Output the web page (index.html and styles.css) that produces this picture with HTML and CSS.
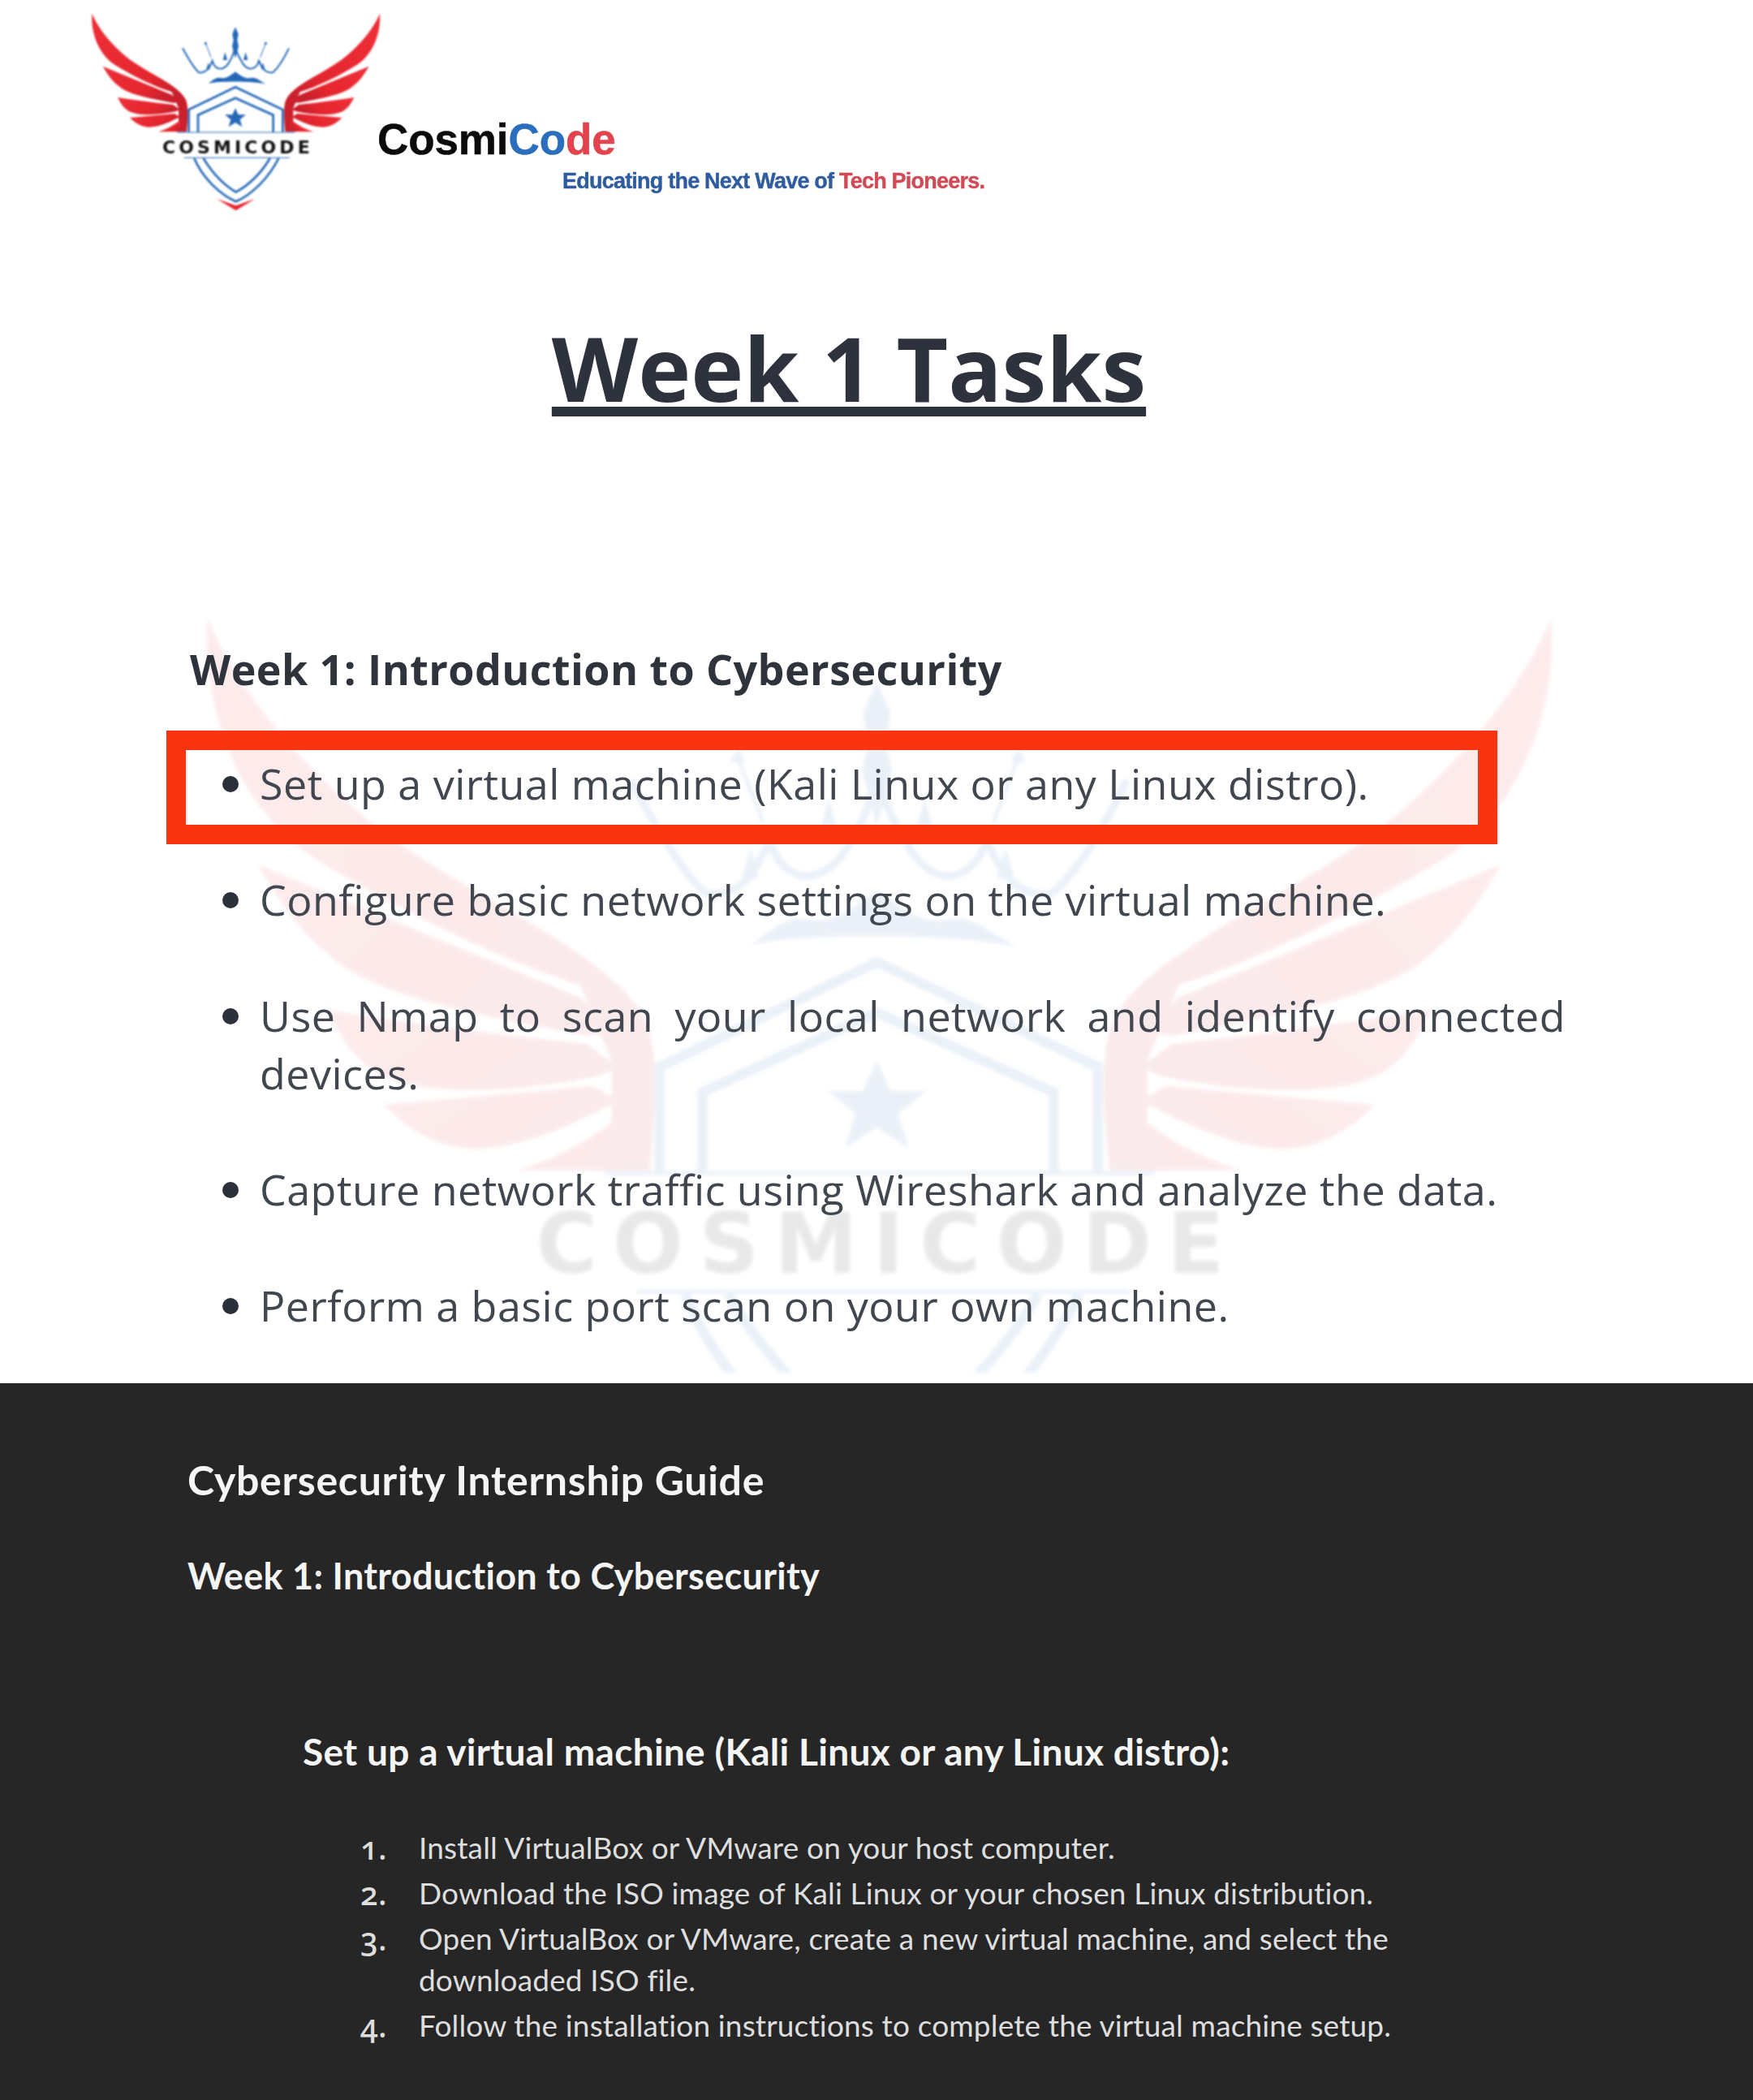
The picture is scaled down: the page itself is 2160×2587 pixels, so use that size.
FILE: index.html
```html
<!DOCTYPE html>
<html lang="en">
<head>
<meta charset="utf-8">
<title>Week 1 Tasks</title>
<link rel="stylesheet" href="styles.css">
</head>
<body>
<svg class="defs" width="0" height="0" aria-hidden="true">
  <defs>
    <linearGradient id="wing-red" x1="0" y1="0" x2="1" y2="0.4">
      <stop offset="0" stop-color="#ee2f38"/>
      <stop offset="0.7" stop-color="#e5262f"/>
      <stop offset="1" stop-color="#c9202c"/>
    </linearGradient>
    <g id="wing" fill="url(#wing-red)">
      <path d="M100 50C125 110 190 190 270 240C340 285 420 320 445 365C456 385 456 420 450 487H420V400L395 340C330 320 250 280 185 240C130 205 95 130 100 50Z"/>
      <path d="M140 245L395 350L425 378L400 380C320 365 230 350 195 315C170 295 155 270 140 245Z"/>
      <path d="M195 360C270 372 340 380 400 387L425 405L410 412C350 425 270 430 235 410C215 398 205 380 195 360Z"/>
      <path d="M240 435L405 420L425 432C390 450 350 470 310 470C280 468 260 455 240 435Z"/>
      <path d="M345 487C375 478 400 465 425 445L445 487Z"/>
    </g>
    <g id="emblem">
      <use href="#wing"/>
      <use href="#wing" transform="translate(1264 0) scale(-1 1)"/>
      <path class="blue-line thin" d="M435 178C455 215 475 250 495 268C515 270 530 262 545 225C555 262 590 265 610 225C622 205 628 190 630 160C632 190 640 205 652 225C672 265 705 262 717 225C732 262 748 270 768 268C790 250 810 215 828 178"/>
      <path class="blue-line hair" d="M520 160L540 212M742 160L722 212"/>
      <path class="blue-fill" d="M630 100L641 125L637 150L642 170L630 215L618 170L623 150L619 125Z"/>
      <path class="blue-fill" d="M592 192L600 222L584 222ZM668 192L676 222L660 222ZM530 232L537 256L523 256ZM732 232L739 256L725 256ZM520 152L526 164L514 164ZM742 152L748 164L736 164Z"/>
      <path class="blue-fill" d="M530 308C545 300 555 285 575 288C590 292 605 285 630 265C655 285 670 292 688 288C708 285 720 300 742 310C700 300 580 298 530 308Z"/>
      <path class="blue-line" d="M458 488V405L630 322L805 405V488"/>
      <path class="blue-line" d="M492 488V425L630 362L770 425V488"/>
      <path class="blue-line" d="M478 585C510 660 575 720 632 745C690 720 752 660 790 585"/>
      <path class="blue-line" d="M512 585C545 640 590 685 632 710C678 685 725 640 758 585"/>
      <path class="blue-fill" d="M630 400L641 424H669L647 442L655 469L630 453L605 469L613 442L591 424H619Z"/>
      <path class="wing-tail" d="M562 735L632 760L702 735L632 778Z"/>
      <path class="rule" d="M415 489H850M440 583H830"/>
      <text class="emblem-text" x="360" y="568" textLength="545">COSMICODE</text>
    </g>
  </defs>
</svg>

<main class="page">
  <section class="doc">
    <svg class="watermark" viewBox="96 0 1070 647" aria-hidden="true"><use href="#emblem"/></svg>

    <header class="brand">
      <svg class="logo" viewBox="96 0 1062 840" role="img" aria-label="CosmiCode logo"><use href="#emblem"/></svg>
      <div class="wordmark">
        <div class="brand-name">Cosmi<span class="c-blue">Co</span><span class="c-red">de</span></div>
        <div class="tagline">Educating the Next Wave of <span class="c-tag-red">Tech Pioneers.</span></div>
      </div>
    </header>

    <h1 class="title">Week 1 Tasks</h1>

    <section class="tasks">
      <h2 class="tasks-heading">Week 1: Introduction to Cybersecurity</h2>
      <ul class="task-list">
        <li>Set up a virtual machine (Kali Linux or any Linux distro).</li>
        <li>Configure basic network settings on the virtual machine.</li>
        <li>Use Nmap to scan your local network and identify connected devices.</li>
        <li>Capture network traffic using Wireshark and analyze the data.</li>
        <li>Perform a basic port scan on your own machine.</li>
      </ul>
      <div class="highlight"></div>
    </section>
  </section>

  <section class="guide">
    <h2 class="guide-title">Cybersecurity Internship Guide</h2>
    <h3 class="guide-week">Week 1: Introduction to Cybersecurity</h3>
    <h4 class="guide-task">Set up a virtual machine (Kali Linux or any Linux distro):</h4>
    <ol class="guide-steps">
      <li>Install VirtualBox or VMware on your host computer.</li>
      <li>Download the ISO image of Kali Linux or your chosen Linux distribution.</li>
      <li>Open VirtualBox or VMware, create a new virtual machine, and select the downloaded ISO file.</li>
      <li>Follow the installation instructions to complete the virtual machine setup.</li>
    </ol>
  </section>
</main>
</body>
</html>
```
FILE: styles.css
```css
* { box-sizing: border-box; }
html, body { margin: 0; padding: 0; background: #fff; }
.defs { position: absolute; }
.page { width: 2160px; }

.wing-tail { fill: #e8262f; }
.blue-fill { fill: #2468b8; }
.blue-line { fill: none; stroke: #2468b8; stroke-width: 8; }
.blue-line.thin { stroke-width: 6; }
.blue-line.hair { stroke-width: 3; }
.rule { fill: none; stroke: #2468b8; stroke-width: 3; }
.emblem-text { font-family: "DejaVu Sans", sans-serif; font-weight: 700; font-size: 66px; fill: #111; }

.doc { position: relative; height: 1704px; overflow: hidden; background: #fff; }
.watermark { position: absolute; left: 249px; top: 684px; width: 1666px; height: 1007px; opacity: 0.09; filter: blur(2px); }

.brand { position: relative; display: flex; height: 280px; padding-left: 112px; }
.logo { width: 354px; height: 280px; flex: none; overflow: visible; filter: blur(0.8px); }
.wordmark { padding-top: 145px; margin-left: -1px; filter: blur(0.7px); }
.brand-name { font-family: "Liberation Sans", Arial, sans-serif; font-weight: 700; font-size: 53px; line-height: 53px; letter-spacing: -0.1px; color: #0b0b0b; -webkit-text-stroke: 0.5px currentColor; }
.c-blue { color: #2a6ebd; }
.c-red { color: #e2434d; }
.tagline { margin: 10px 0 0 228px; font-family: "Liberation Sans", Arial, sans-serif; font-weight: 700; font-size: 27px; line-height: 30px; letter-spacing: -0.78px; color: #2f5c9f; white-space: nowrap; -webkit-text-stroke: 0.4px currentColor; }
.c-tag-red { color: #d24a55; }

.title { position: relative; margin: 106px 0 0; padding-right: 68px; text-align: center; font-family: "Open Sans", sans-serif; font-weight: 700; font-size: 110px; line-height: 132px; color: #2d323d; text-decoration: underline; text-decoration-thickness: 12px; text-underline-offset: 6px; text-decoration-skip-ink: none; filter: blur(0.5px); }

.tasks { position: relative; margin-top: 276px; font-family: "Open Sans", sans-serif; color: #41464f; }
.tasks-heading { margin: 0; padding-left: 234px; font-size: 52px; line-height: 60px; font-weight: 700; color: #2f333c; letter-spacing: 0.43px; filter: blur(0.4px); }
.task-list { margin: 75px 0 0; padding: 0 231px 0 320px; list-style: none; font-size: 52px; line-height: 71px; letter-spacing: 0.48px; text-align: justify; filter: blur(0.4px); }
.task-list li { position: relative; margin-bottom: 72px; }
.task-list li::before { content: ""; position: absolute; left: -46px; top: 27px; width: 20px; height: 20px; border-radius: 50%; background: #2b303b; }
.highlight { position: absolute; left: 205px; top: 106px; width: 1640px; height: 140px; border: 24px solid #f7340f; }

.guide { height: 883px; background: #262626; color: #f2f2f2; font-family: Lato, sans-serif; padding: 91px 0 0 231px; }
.guide-title { margin: 0; font-size: 50px; line-height: 56px; font-weight: 700; letter-spacing: 0.7px; color: #f5f5f5; }
.guide-week { margin: 63px 0 0; font-size: 45px; line-height: 54px; font-weight: 700; letter-spacing: 0.3px; color: #f5f5f5; }
.guide-task { margin: 163px 0 0 142px; font-size: 46px; line-height: 54px; font-weight: 700; letter-spacing: 0.3px; color: #f5f5f5; }
.guide-steps { margin: 65px 0 0; padding: 0 420px 0 285px; list-style: none; counter-reset: step; font-size: 37px; line-height: 51px; letter-spacing: 0.15px; font-weight: 400; color: #dedede; }
.guide-steps li { position: relative; counter-increment: step; margin-bottom: 5px; }
.guide-steps li::before { content: counter(step) "."; position: absolute; left: -72px; top: 0; font-family: "Noto Sans", sans-serif; font-size: 39px; font-weight: 500; font-feature-settings: "onum" 1; font-variant-numeric: oldstyle-nums; }
```
